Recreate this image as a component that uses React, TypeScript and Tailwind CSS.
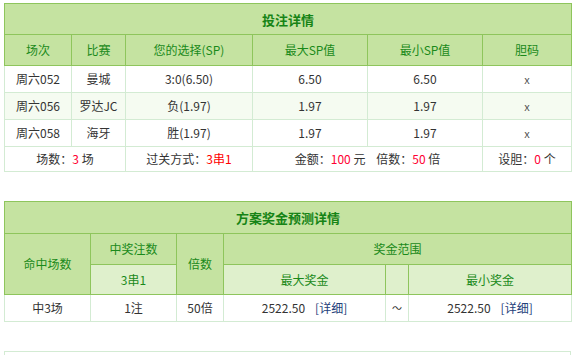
const dark = "border border-[#8ec55c]";
const light = "border border-[#d3ebd3]";

const betRows = [
  { no: "周六052", match: "曼城", pick: "3:0(6.50)", max: "6.50", min: "6.50", alt: false },
  { no: "周六056", match: "罗达JC", pick: "负(1.97)", max: "1.97", min: "1.97", alt: true },
  { no: "周六058", match: "海牙", pick: "胜(1.97)", max: "1.97", min: "1.97", alt: false },
];

function Red({ children }: { children: React.ReactNode }) {
  return <span className="text-[#ff0033]">{children}</span>;
}

export default function App() {
  return (
    <div
      className="w-[575px] h-[355px] overflow-hidden bg-white pt-[3px] pl-[4px] text-[12px] text-[#333]"
      style={{ fontFamily: '"Noto Sans CJK SC", "Liberation Sans", sans-serif' }}
    >
      {/* 投注详情 */}
      <table className="w-[567px] table-fixed border-collapse text-center leading-none">
        <colgroup>
          <col className="w-[67px]" />
          <col className="w-[54px]" />
          <col className="w-[127px]" />
          <col className="w-[115px]" />
          <col className="w-[115px]" />
          <col className="w-[89px]" />
        </colgroup>
        <tbody>
          <tr>
            <td colSpan={6} className={`${dark} h-[31px] bg-[#c5e3a1] text-[13px] font-bold text-[#168416]`}>
              投注详情
            </td>
          </tr>
          <tr className="bg-[#c5e3a1] text-[#1a8a1a]">
            {["场次", "比赛", "您的选择(SP)", "最大SP值", "最小SP值", "胆码"].map((h) => (
              <td key={h} className={`${dark} h-[31px]`}>
                {h}
              </td>
            ))}
          </tr>
          {betRows.map((r) => (
            <tr key={r.no} className={r.alt ? "bg-[#f5fbf1]" : "bg-white"}>
              <td className={`${light} h-[27px]`}>{r.no}</td>
              <td className={light}>{r.match}</td>
              <td className={light}>{r.pick}</td>
              <td className={light}>{r.max}</td>
              <td className={light}>{r.min}</td>
              <td className={`${light} text-[11px] text-[#555]`}>x</td>
            </tr>
          ))}
          <tr>
            <td colSpan={2} className={`${light} h-[25px]`}>
              场数：<Red>3</Red> 场
            </td>
            <td className={light}>
              过关方式：<span className="text-[#ff0000]">3串1</span>
            </td>
            <td colSpan={2} className={`${light} whitespace-pre`}>
              金额：<Red>100</Red> 元{"    "}倍数：<Red>50</Red> 倍
            </td>
            <td className={light}>
              设胆：<Red>0</Red> 个
            </td>
          </tr>
        </tbody>
      </table>

      {/* 方案奖金预测详情 */}
      <table className="mt-[29px] w-[567px] table-fixed border-collapse text-center leading-none">
        <colgroup>
          <col className="w-[86px]" />
          <col className="w-[86px]" />
          <col className="w-[47px]" />
          <col className="w-[162px]" />
          <col className="w-[23px]" />
          <col className="w-[163px]" />
        </colgroup>
        <tbody>
          <tr>
            <td colSpan={6} className={`${dark} h-[32px] bg-[#c5e3a1] text-[13px] font-bold text-[#168416]`}>
              方案奖金预测详情
            </td>
          </tr>
          <tr className="text-[#1a8a1a]">
            <td rowSpan={2} className={`${dark} bg-[#c5e3a1]`}>
              命中场数
            </td>
            <td className={`${dark} h-[31px] bg-[#c5e3a1]`}>中奖注数</td>
            <td rowSpan={2} className={`${dark} bg-[#c5e3a1]`}>
              倍数
            </td>
            <td colSpan={3} className={`${dark} bg-[#c5e3a1]`}>
              奖金范围
            </td>
          </tr>
          <tr className="bg-[#dff0cc] text-[#1a8a1a]">
            <td className={`${dark} h-[30px]`}>3串1</td>
            <td className={dark}>最大奖金</td>
            <td className={dark}></td>
            <td className={dark}>最小奖金</td>
          </tr>
          <tr className="bg-white">
            <td className={`${light} h-[27px]`}>中3场</td>
            <td className={light}>1注</td>
            <td className={light}>50倍</td>
            <td className={light}>
              2522.50<span className="ml-[10px] text-[#23407a]">[详细]</span>
            </td>
            <td className={`${light} text-[10px]`}>～</td>
            <td className={light}>
              2522.50<span className="ml-[10px] text-[#23407a]">[详细]</span>
            </td>
          </tr>
        </tbody>
      </table>

      <div className="mt-[29px] h-[20px] w-[567px] border border-[#d3ebd3]" />
    </div>
  );
}
